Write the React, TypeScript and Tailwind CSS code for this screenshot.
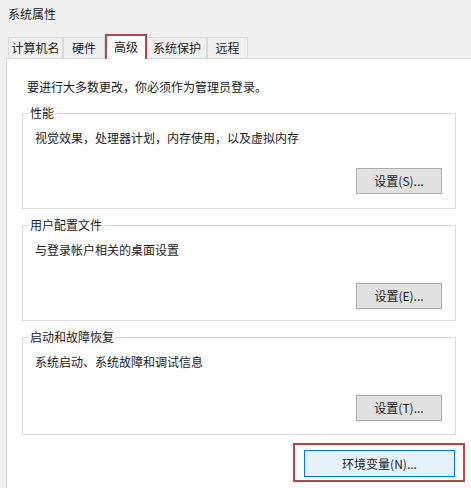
const tabs = [
  { label: '计算机名', w: 'w-[55px]' },
  { label: '硬件', w: 'w-[42px]' },
  { label: '高级', w: 'w-[42px]', active: true },
  { label: '系统保护', w: 'w-[60px]' },
  { label: '远程', w: 'w-[41px]' },
];

const groups = [
  { title: '性能', desc: '视觉效果，处理器计划，内存使用，以及虚拟内存', button: '设置(S)...', h: 'h-[96px]', gap: 'mt-[22px]', top: 'mt-[18px]' },
  { title: '用户配置文件', desc: '与登录帐户相关的桌面设置', button: '设置(E)...', h: 'h-[96px]', gap: 'mt-[25px]', top: 'mt-[16px]' },
  { title: '启动和故障恢复', desc: '系统启动、系统故障和调试信息', button: '设置(T)...', h: 'h-[98px]', gap: 'mt-[25px]', top: 'mt-[16px]' },
];

type Group = (typeof groups)[number];

function GroupBox({ title, desc, button, h, gap, top }: Group) {
  return (
    <div className={`${top} ${h} border border-[#dcdcdc] mr-[17px]`}>
      <div className="-mt-[9px] ml-[6px] px-[1px] w-fit bg-white leading-[16px]">{title}</div>
      <p className="mt-[9px] ml-[12px] leading-[16px]">{desc}</p>
      <div className={`flex justify-end mr-[13px] ${gap}`}>
        <button className="w-[86px] h-[26px] bg-[#e1e1e1] border border-[#adadad] leading-[16px]">
          {button}
        </button>
      </div>
    </div>
  );
}

export default function App() {
  return (
    <div
      className="w-[471px] h-[488px] overflow-hidden bg-[#f0f0f0] flex flex-col text-[12px] text-[#1a1a1a]"
      style={{ fontFamily: '"Noto Sans CJK SC", "Noto Sans", sans-serif' }}
    >
      {/* Title */}
      <div className="h-[28px] pl-[8px] pt-[6px] leading-[16px]">系统属性</div>

      {/* Tabs */}
      <div className="h-[30px] flex items-end pl-[8px]">
        {tabs.map((t) =>
          t.active ? (
            <div
              key={t.label}
              className={`${t.w} h-[25px] bg-white border-2 border-b-0 border-[#b04a4a] flex items-center justify-center pb-[2px] -mb-px relative`}
            >
              {t.label}
            </div>
          ) : (
            <div
              key={t.label}
              className={`${t.w} h-[21px] bg-[#f0f0f0] border border-b-0 border-[#d9d9d9] flex items-center justify-center`}
            >
              {t.label}
            </div>
          )
        )}
      </div>

      {/* Panel */}
      <div className="flex-1 ml-[6px] -mr-[2px] bg-white border-l border-t border-[#d9d9d9] pl-[15px]">
        <p className="pt-[20px] pl-[5px] leading-[16px]">要进行大多数更改，你必须作为管理员登录。</p>

        {groups.map((g) => (
          <GroupBox key={g.title} {...g} />
        ))}

        <div className="flex justify-end mr-[8px] mt-[8px]">
          <div className="border-2 border-[#b04a4a] pl-[9px] pr-[8px] pt-[5px] pb-[3px]">
            <button className="w-[151px] h-[27px] bg-[#e5f1fb] border border-[#0078d7] leading-[16px]">
              环境变量(N)...
            </button>
          </div>
        </div>
      </div>
    </div>
  );
}
